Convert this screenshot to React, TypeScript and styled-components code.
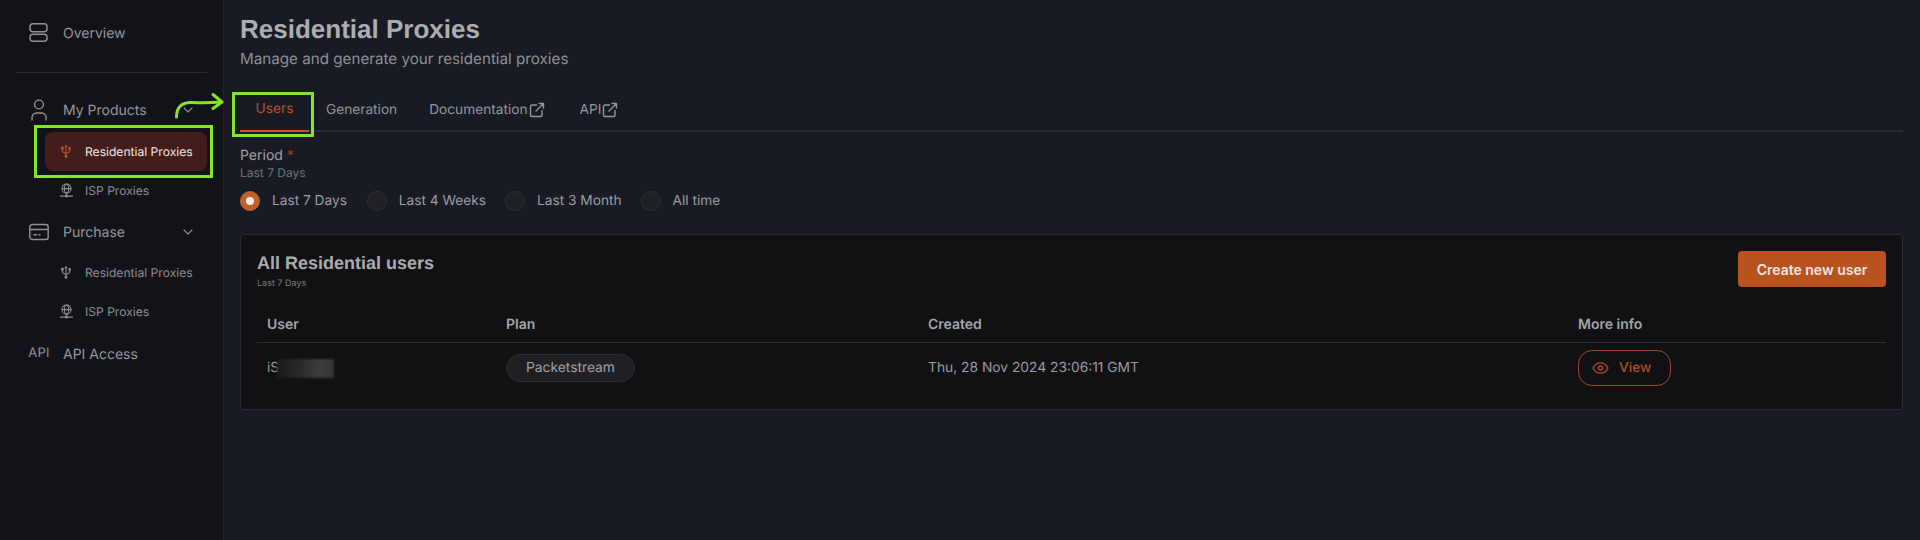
import React from "react";
import styled, { createGlobalStyle } from "styled-components";

const Global = createGlobalStyle`
  html, body { margin: 0; padding: 0; background: #181b24; }
  body { font-family: Inter, "Liberation Sans", sans-serif; overflow: hidden; text-rendering: geometricPrecision; }
  * { box-sizing: border-box; }
`;

const Page = styled.div`
  position: relative;
  display: flex;
  width: 1920px;
  height: 540px;
  overflow: hidden;
  background: #181b24;
`;

const Sidebar = styled.aside`
  width: 224px;
  flex: none;
  height: 100%;
  background: #121318;
  border-right: 1px solid #24262d;
  padding: 13px 16px 0 15px;
  display: flex;
  flex-direction: column;
`;

const NavRow = styled.div<{ $mt?: number }>`
  display: flex;
  align-items: center;
  height: 40px;
  margin-top: ${(p) => p.$mt ?? 0}px;
  padding-left: 14px;
  font-size: 14px;
  color: #96979c;
`;

const NavIcon = styled.span`
  width: 20px;
  height: 20px;
  margin-right: 14px;
  display: flex;
  align-items: center;
  justify-content: center;
  flex: none;
  color: #8f9096;
`;

const ApiMark = styled(NavIcon)`
  font-size: 13px;
  font-weight: 400;
  letter-spacing: 0.3px;
  margin-top: -2px;
`;

const Chevron = styled.span`
  margin-left: auto;
  margin-right: 14px;
  display: flex;
  color: #8b8c92;
`;

const Divider = styled.div`
  height: 1px;
  background: #2b2c31;
  margin-top: 19px;
`;

const SubRow = styled.div<{ $active?: boolean; $mt?: number }>`
  display: flex;
  align-items: center;
  height: 39px;
  width: 162px;
  margin-left: 30px;
  margin-top: ${(p) => p.$mt ?? 0}px;
  padding-left: 13px;
  border-radius: 8px;
  font-size: 12.1px;
  background: ${(p) => (p.$active ? "#431d1c" : "transparent")};
  color: ${(p) => (p.$active ? "#f2e6e2" : "#8d8e93")};
`;

const SubIcon = styled.span<{ $active?: boolean }>`
  width: 16px;
  height: 16px;
  margin-right: 11px;
  display: flex;
  align-items: center;
  justify-content: center;
  flex: none;
  color: ${(p) => (p.$active ? "#b9532a" : "#8d8e93")};
`;

const Main = styled.main`
  flex: 1;
  min-width: 0;
  padding: 13px 17px 0 16px;
  display: flex;
  flex-direction: column;
`;

const Title = styled.h1`
  margin: 0;
  font-family: "Liberation Sans", Arial, sans-serif;
  font-size: 26px;
  line-height: 32px;
  font-weight: 700;
  color: #acadb1;
`;

const Subtitle = styled.p`
  margin: -1px 0 0;
  font-size: 15.2px;
  line-height: 30px;
  color: #8e8f94;
`;

const Tabs = styled.div`
  display: flex;
  align-items: stretch;
  height: 43px;
  margin-top: 15px;
  border-bottom: 2px solid #2a2c33;
`;

const Tab = styled.div<{ $active?: boolean; $ml?: number }>`
  display: flex;
  align-items: center;
  justify-content: center;
  height: 43px;
  padding-bottom: 2px;
  width: ${(p) => (p.$active ? "69px" : "auto")};
  margin-left: ${(p) => p.$ml ?? 0}px;
  font-size: 13.7px;
  color: ${(p) => (p.$active ? "#b9532a" : "#95969b")};
  border-bottom: ${(p) => (p.$active ? "2px solid #bb5a30" : "none")};
`;

const TabIcon = styled.span`
  display: flex;
  margin-left: 1px;
`;

const FieldLabel = styled.div`
  margin-top: 15px;
  font-size: 14px;
  line-height: 18px;
  color: #a0a1a5;
`;

const Required = styled.span`
  color: #93402a;
`;

const Hint = styled.div`
  font-size: 12px;
  line-height: 18px;
  margin-top: -1px;
  color: #707177;
`;

const Radios = styled.div`
  display: flex;
  align-items: center;
  height: 20px;
  margin-top: 9px;
  font-size: 13.7px;
  color: #9c9da1;
`;

const Radio = styled.span<{ $checked?: boolean; $ml?: number }>`
  width: 20px;
  height: 20px;
  flex: none;
  border-radius: 50%;
  margin-left: ${(p) => p.$ml ?? 0}px;
  margin-right: 12px;
  display: flex;
  align-items: center;
  justify-content: center;
  background: ${(p) => (p.$checked ? "#c0602b" : "#202125")};
  border: 1px solid ${(p) => (p.$checked ? "#c0602b" : "#2f3034")};
  &::after {
    content: "";
    display: ${(p) => (p.$checked ? "block" : "none")};
    width: 8px;
    height: 8px;
    border-radius: 50%;
    background: #f6efe8;
  }
`;

const Card = styled.section`
  margin-top: 23px;
  height: 176px;
  background: #111113;
  border: 1px solid #2a2b30;
  border-radius: 4px;
  padding: 16px 16px 0;
`;

const CardHead = styled.div`
  display: flex;
  justify-content: space-between;
  align-items: flex-start;
  height: 51px;
`;

const CardTitle = styled.h2`
  margin: 0;
  font-family: "Liberation Sans", Arial, sans-serif;
  font-size: 18px;
  line-height: 24px;
  font-weight: 700;
  color: #aaabaf;
`;

const CardSub = styled.div`
  font-size: 9px;
  line-height: 14px;
  margin-top: 2px;
  color: #7c7d82;
`;

const PrimaryButton = styled.button`
  width: 148px;
  height: 36px;
  border: 0;
  border-radius: 4px;
  background: #b9521f;
  color: #f4e8e0;
  font: 600 14px Inter, sans-serif;
`;

const TableGrid = styled.div`
  display: grid;
  grid-template-columns: 239px 422px 650px 1fr;
  align-items: center;
  padding-left: 10px;
`;

const HeadRow = styled(TableGrid)`
  height: 38px;
  margin-top: 3px;
  padding-top: 2px;
  border-bottom: 1px solid #2c2d31;
  font-size: 14px;
  font-weight: 600;
  color: #a3a4a8;
`;

const BodyRow = styled(TableGrid)`
  height: 50px;
  font-size: 13.8px;
  color: #9a9ba0;
`;

const UserCell = styled.div`
  display: flex;
  align-items: center;
`;

const Blur = styled.span`
  width: 57px;
  height: 19px;
  margin-left: -2px;
  background: linear-gradient(90deg, #1a1a1c 0%, #2c2c2e 45%, #3d3d3f 75%, #333335 100%);
  filter: blur(1px);
`;

const PlanPill = styled.span`
  display: inline-flex;
  align-items: center;
  justify-content: center;
  width: 129px;
  height: 28px;
  border-radius: 14px;
  background: #202024;
  border: 1px solid #2c2c30;
  color: #a0a1a5;
`;

const ViewButton = styled.div`
  display: inline-flex;
  align-items: center;
  gap: 10px;
  width: 93px;
  height: 36px;
  padding-left: 13px;
  border: 1px solid #a14a22;
  border-radius: 14px;
  color: #ab4f25;
  font-size: 13.7px;
  font-weight: 500;
`;

const Highlight = styled.div<{ $l: number; $t: number; $w: number; $h: number }>`
  position: absolute;
  left: ${(p) => p.$l}px;
  top: ${(p) => p.$t}px;
  width: ${(p) => p.$w}px;
  height: ${(p) => p.$h}px;
  border: 3px solid #86e52b;
  pointer-events: none;
`;

const Arrow = styled.svg`
  position: absolute;
  left: 172px;
  top: 90px;
  pointer-events: none;
`;

const s = { fill: "none", stroke: "currentColor", strokeLinecap: "round" as const, strokeLinejoin: "round" as const };

const ServerIcon = () => (
  <svg width="20" height="20" viewBox="0 0 20 20" {...s} strokeWidth="1.5">
    <rect x="1" y="0.800" width="17" height="8" rx="3" />
    <rect x="1" y="11.200" width="17" height="7" rx="3" />
  </svg>
);
const UserIcon = () => (
  <svg width="20" height="24" viewBox="0 0 20 24" {...s} strokeWidth="1.4">
    <circle cx="10" cy="6.500" r="4.400" />
    <path d="M3 22v-2.500a4.500 4.500 0 0 1 4.500-4.500h5a4.500 4.500 0 0 1 4.500 4.500V22" />
  </svg>
);
const CardIcon = () => (
  <svg width="20" height="18" viewBox="0 0 20 18" {...s} strokeWidth="1.4">
    <rect x="0.800" y="1.500" width="18.400" height="15" rx="2.600" />
    <path d="M1 6.500h18M5 11.800h2.600M10 11.800h1" />
  </svg>
);
const ChevronIcon = () => (
  <svg width="10" height="6" viewBox="0 0 10 6" {...s} strokeWidth="1.1">
    <path d="M1 1l4 4 4-4" />
  </svg>
);
const UsbIcon = () => (
  <svg width="10" height="13" viewBox="0 0 10 13" {...s} strokeWidth="1.1">
    <path d="M5 .8v11M1.400 4v1.800c0 .8.500 1.300 1.200 1.600L5 8.500l2.400-1.100c.7-.3 1.200-.8 1.200-1.600V4" />
    <circle cx="5" cy="11.300" r="1" fill="currentColor" />
    <rect x=".6" y="2.400" width="1.600" height="1.600" fill="currentColor" />
    <circle cx="8.600" cy="3.400" r=".8" fill="currentColor" />
    <path d="M4 1.800L5 .8l1 1" />
  </svg>
);
const GlobeIcon = () => (
  <svg width="15" height="15" viewBox="0 0 16 16" {...s} strokeWidth="1.100">
    <circle cx="8" cy="6" r="4.800" />
    <ellipse cx="8" cy="6" rx="2.200" ry="4.800" />
    <path d="M3.200 6h9.600M8 10.800v3M1.500 14h13" />
    <circle cx="8" cy="14" r="1" fill="currentColor" />
  </svg>
);
const ExternalIcon = () => (
  <svg width="16" height="16" viewBox="0 0 16 16" {...s} strokeWidth="1.400">
    <path d="M7.500 3H3a1.500 1.500 0 0 0-1.500 1.500V13A1.500 1.500 0 0 0 3 14.500h8.500A1.500 1.500 0 0 0 13 13V8.500" />
    <path d="M10 1.500h4.500V6M14.500 1.500L7 9" />
  </svg>
);
const EyeIcon = () => (
  <svg width="17" height="14" viewBox="0 0 17 14" {...s} strokeWidth="1.300">
    <path d="M1 7c1.700-3.400 4.200-5.200 7.500-5.200S14.300 3.600 16 7c-1.700 3.400-4.200 5.200-7.500 5.200S2.700 10.400 1 7z" />
    <circle cx="8.500" cy="7" r="2" />
  </svg>
);

const Products = ["Residential Proxies", "ISP Proxies"];

export default function App() {
  return (
    <Page>
      <Global />
      <Sidebar>
        <NavRow>
          <NavIcon><ServerIcon /></NavIcon>
          Overview
        </NavRow>
        <Divider />
        <NavRow $mt={17}>
          <NavIcon><UserIcon /></NavIcon>
          My Products
          <Chevron><ChevronIcon /></Chevron>
        </NavRow>
        <SubRow $active $mt={2}>
          <SubIcon $active><UsbIcon /></SubIcon>
          {Products[0]}
        </SubRow>
        <SubRow>
          <SubIcon><GlobeIcon /></SubIcon>
          {Products[1]}
        </SubRow>
        <NavRow $mt={2}>
          <NavIcon><CardIcon /></NavIcon>
          Purchase
          <Chevron><ChevronIcon /></Chevron>
        </NavRow>
        <SubRow $mt={1}>
          <SubIcon><UsbIcon /></SubIcon>
          {Products[0]}
        </SubRow>
        <SubRow>
          <SubIcon><GlobeIcon /></SubIcon>
          {Products[1]}
        </SubRow>
        <NavRow $mt={3}>
          <ApiMark>API</ApiMark>
          API Access
        </NavRow>
      </Sidebar>
      <Main>
        <Title>Residential Proxies</Title>
        <Subtitle>Manage and generate your residential proxies</Subtitle>
        <Tabs>
          <Tab $active>Users</Tab>
          <Tab $ml={17}>Generation</Tab>
          <Tab $ml={32}>Documentation<TabIcon><ExternalIcon /></TabIcon></Tab>
          <Tab $ml={35}>API<TabIcon><ExternalIcon /></TabIcon></Tab>
        </Tabs>
        <FieldLabel>Period <Required>*</Required></FieldLabel>
        <Hint>Last 7 Days</Hint>
        <Radios>
          <Radio $checked />Last 7 Days
          <Radio $ml={20} />Last 4 Weeks
          <Radio $ml={19} />Last 3 Month
          <Radio $ml={19} />All time
        </Radios>
        <Card>
          <CardHead>
            <div>
              <CardTitle>All Residential users</CardTitle>
              <CardSub>Last 7 Days</CardSub>
            </div>
            <PrimaryButton>Create new user</PrimaryButton>
          </CardHead>
          <HeadRow>
            <div>User</div>
            <div>Plan</div>
            <div>Created</div>
            <div>More info</div>
          </HeadRow>
          <BodyRow>
            <UserCell>iS<Blur /></UserCell>
            <div><PlanPill>Packetstream</PlanPill></div>
            <div>Thu, 28 Nov 2024 23:06:11 GMT</div>
            <div>
              <ViewButton><EyeIcon />View</ViewButton>
            </div>
          </BodyRow>
        </Card>
      </Main>
      <Highlight $l={34} $t={125} $w={179} $h={53} />
      <Highlight $l={232} $t={92} $w={82} $h={45} />
      <Arrow width="56" height="30" viewBox="0 0 56 30" fill="none" stroke="#86e52b" strokeWidth="3" strokeLinecap="round" strokeLinejoin="round">
        <path d="M4.500 27C4.500 17 10 12 20 12.500C30 13 38 13 49.500 12" />
        <path d="M41 4.500L50 12L41 18.500" />
      </Arrow>
    </Page>
  );
}
